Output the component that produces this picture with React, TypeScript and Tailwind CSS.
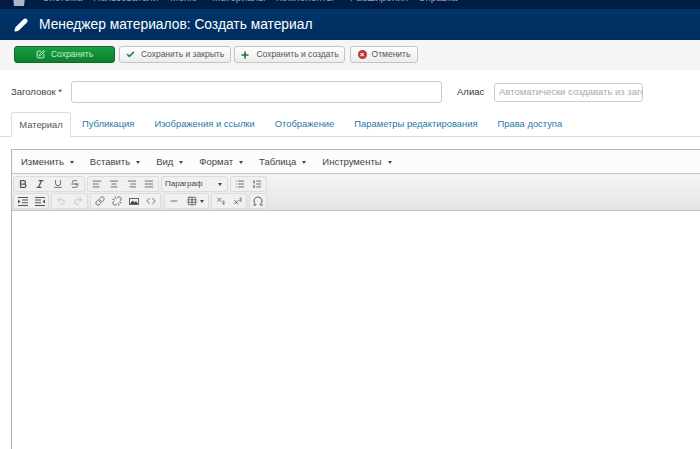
import React from "react";
import { Check, Plus, Pencil, SquarePen, Undo2, Redo2, Link, Unlink, Code, Minus, Table, Omega, Bold, Italic, Underline, Strikethrough, AlignLeft, AlignCenter, AlignRight, AlignJustify, List, ListOrdered, Subscript, Superscript } from "lucide-react";

const nav: [string, string][] = [["Система", "w-[51px]"], ["Пользователи", "w-[77px]"], ["Меню", "w-[42px]"], ["Материалы", "w-[64px]"], ["Компоненты", "w-[74px]"], ["Расширения", "w-[68px]"], ["Справка", "w-[60px]"]];

function Tb({ children, faded }: { children: React.ReactNode; faded?: boolean }) {
  return <span className={`flex h-[14px] min-w-0 flex-1 items-center justify-center ${faded ? "text-[#c0c0c0]" : "text-[#555]"}`}>{children}</span>;
}
function Group({ w, children }: { w: string; children: React.ReactNode }) {
  return <div className={`flex h-[16px] shrink-0 items-center rounded-[2px] border border-[#dcdcdc] bg-[#f0f0f0] ${w}`}>{children}</div>;
}
function Caret() {
  return <span className="h-0 w-0 border-x-[2.5px] border-t-[3px] border-x-transparent border-t-[#444]" />;
}
function IndentIcon({ flip }: { flip?: boolean }) {
  return (
    <svg width="10" height="9" viewBox="0 0 10 9" fill="currentColor" className={flip ? "-scale-x-100" : ""}>
      <path d="M0 0h10v1H0zM4 2.6h6v1H4zM4 5.2h6v1H4zM0 8h10v1H0zM0 2.5l2.6 2-2.6 2z" />
    </svg>
  );
}
function PicIcon() {
  return (
    <svg width="10" height="9" viewBox="0 0 10 9"><path fill="#666" d="M0 1h10v7H0z" /><path fill="#eee" d="M1 2h8v5H1z" /><path fill="#444" d="M1 7l2.5-3.5L5.5 5.5 7 4l2 3z" /></svg>
  );
}
const ic = { size: 10, strokeWidth: 2 };

export default function App() {
  return (
    <div className="h-[449px] w-[700px] overflow-hidden bg-white text-[#333] [font-family:'Liberation_Sans',Arial,sans-serif]">
      <div className="flex h-[9px] items-center overflow-hidden bg-[#001c40] pl-[12px]">
        <svg width="14" height="12" viewBox="0 0 14 12" className="-mt-[8px] mr-[16px] text-[#a9b6c6]" fill="currentColor"><path d="M1 2h12l-1 9H2z" /></svg>
        {nav.map(([t, w]) => <span key={t} className={`${w} -mt-[14px] shrink-0 whitespace-nowrap text-[10px] text-[#8fa0b5]`}>{t}</span>)}
      </div>
      <div className="flex h-[31px] items-center bg-gradient-to-b from-[#00356b] to-[#002e5f] pl-[14px] text-white">
        <Pencil size={14} strokeWidth={2.5} fill="white" className="mr-[11px]" />
        <span className="text-[13.8px] leading-none">Менеджер материалов: Создать материал</span>
      </div>
      <div className="flex h-[29px] items-center gap-[3px] bg-[#f5f5f5] pl-[14px] text-[8.5px]">
        <div className="flex h-[17px] w-[101px] items-center justify-center gap-[6px] rounded-[3px] border border-[#12682b] bg-gradient-to-b from-[#16a13e] to-[#0d7f2e] text-[#c8eed0]">
          <SquarePen size={9} strokeWidth={2.5} className="text-[#d5f5da]" /><span>Сохранить</span>
        </div>
        <div className="ml-[1px] flex h-[17px] w-[112px] items-center justify-center gap-[6px] rounded-[3px] border border-[#c4c4c4] bg-gradient-to-b from-white to-[#ececec] text-[#555]">
          <Check size={9} strokeWidth={4} className="text-[#1f7a3c]" /><span>Сохранить и закрыть</span>
        </div>
        <div className="flex h-[17px] w-[111px] items-center justify-center gap-[6px] rounded-[3px] border border-[#c4c4c4] bg-gradient-to-b from-white to-[#ececec] text-[#555]">
          <Plus size={10} strokeWidth={4} className="text-[#1f7a3c]" /><span>Сохранить и создать</span>
        </div>
        <div className="ml-[2px] flex h-[17px] w-[68px] items-center justify-center gap-[5px] rounded-[3px] border border-[#c4c4c4] bg-gradient-to-b from-white to-[#ececec] text-[#555]">
          <span className="flex h-[9px] w-[9px] items-center justify-center rounded-full bg-[#bd362f] text-[8px] font-bold leading-none text-white">×</span><span>Отменить</span>
        </div>
      </div>
      <div className="flex h-[43px] items-center border-t border-[#eee] pl-[11px] pt-[2px] text-[9.5px]">
        <span className="w-[60px] text-[#444]">Заголовок *</span>
        <div className="h-[22px] w-[371px] rounded-[3px] border border-[#ccc] bg-white" />
        <span className="ml-[15px] w-[37px] text-[#333]">Алиас</span>
        <div className="flex h-[19px] w-[149px] items-center overflow-hidden whitespace-nowrap rounded-[3px] border border-[#ccc] bg-white pl-[4px] text-[9.5px] text-[#a8a8a8]">Автоматически создавать из заголовка</div>
      </div>
      <div className="flex h-[25px] items-end border-b border-[#ddd] pl-[11px] text-[9.4px] text-[#2a78a8]">
        <div className="-mb-px flex h-[25px] w-[60px] items-center justify-center rounded-t-[3px] border border-b-0 border-[#ddd] bg-white text-[#555]">Материал</div>
        <div className="flex h-[24px] items-center gap-[20px] pl-[11px]">
          <span>Публикация</span><span>Изображения и ссылки</span><span>Отображение</span><span>Параметры редактирования</span><span>Права доступа</span>
        </div>
      </div>
      <div className="ml-[11px] mt-[12px] border-l border-t border-[#b5b5b5]">
        <div className="flex h-[23px] items-center gap-[16px] bg-[#fcfcfc] pl-[9px] pt-[1px] text-[9.5px] text-[#444]">
          {["Изменить", "Вставить", "Вид", "Формат", "Таблица", "Инструменты"].map((t) => (
            <span key={t} className="flex items-center gap-[6px]">{t}<Caret /></span>
          ))}
        </div>
        <div className="flex h-[38px] flex-col gap-[1px] border-y border-[#c4c4c4] bg-gradient-to-b from-[#f6f6f6] to-[#e4e4e4] pl-[1px] pt-[2px]">
          <div className="flex gap-[2px]">
            <Group w="w-[72px]"><Tb><Bold size={10} strokeWidth={3} /></Tb><Tb><Italic size={10} strokeWidth={3} /></Tb><Tb><Underline {...ic} /></Tb><Tb><Strikethrough {...ic} /></Tb></Group>
            <Group w="w-[72px]"><Tb><AlignLeft {...ic} /></Tb><Tb><AlignCenter {...ic} /></Tb><Tb><AlignRight {...ic} /></Tb><Tb><AlignJustify {...ic} /></Tb></Group>
            <Group w="w-[67px]"><span className="flex w-full items-center justify-between pl-[3px] pr-[5px] text-[8px] text-[#444]">Параграф<Caret /></span></Group>
            <Group w="w-[37px]"><Tb><List {...ic} /></Tb><Tb><ListOrdered {...ic} /></Tb></Group>
          </div>
          <div className="flex gap-[2px]">
            <Group w="w-[36px]"><Tb><IndentIcon /></Tb><Tb><IndentIcon flip /></Tb></Group>
            <Group w="w-[37px]"><Tb faded><Undo2 {...ic} /></Tb><Tb faded><Redo2 {...ic} /></Tb></Group>
            <Group w="w-[71px]"><Tb><Link {...ic} /></Tb><Tb><Unlink {...ic} /></Tb><Tb><PicIcon /></Tb><Tb><Code {...ic} /></Tb></Group>
            <div className="ml-[1px]"><Group w="w-[45px]"><Tb><Minus {...ic} /></Tb><span className="flex w-[26px] items-center justify-center gap-[3px] text-[#555]"><Table {...ic} /><Caret /></span></Group></div>
            <Group w="w-[36px]"><Tb><Subscript {...ic} /></Tb><Tb><Superscript {...ic} /></Tb></Group>
            <Group w="w-[18px]"><Tb><Omega size={12} strokeWidth={2} /></Tb></Group>
          </div>
        </div>
        <div className="h-[260px] bg-white" />
      </div>
    </div>
  );
}
